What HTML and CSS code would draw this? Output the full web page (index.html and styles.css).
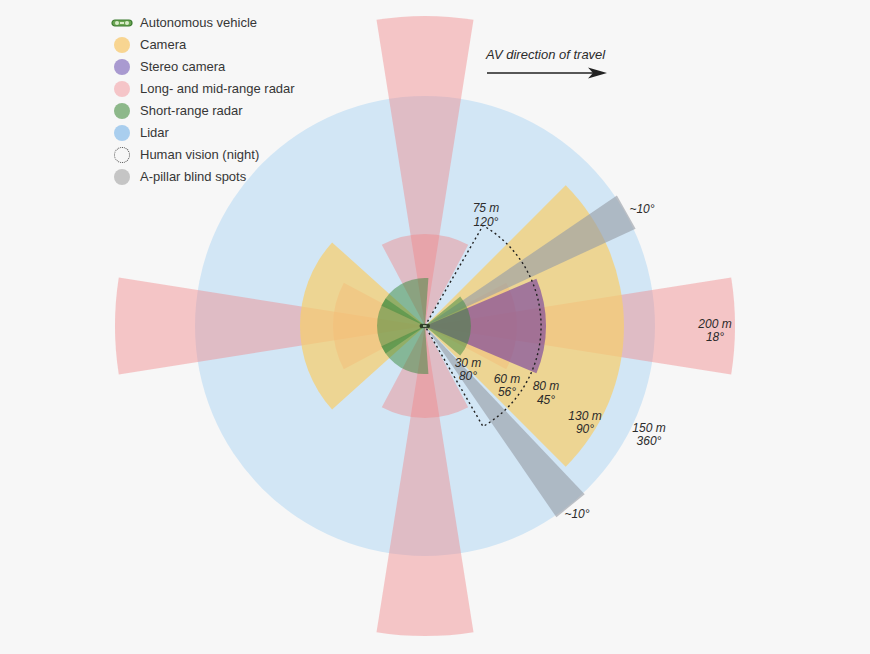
FILE: index.html
```html
<!DOCTYPE html>
<html lang="en">
<head>
<meta charset="utf-8">
<title>AV sensor coverage</title>
<link rel="stylesheet" href="styles.css">
</head>
<body>
<div class="figure">
  <svg class="diagram" width="870" height="654" viewBox="0 0 870 654" xmlns="http://www.w3.org/2000/svg">
    <!-- Lidar 150 m 360 -->
    <circle class="lidar" cx="425" cy="326" r="230"/>
    <!-- Long-range radar 200 m 18 -->
    <path class="radar" d="M425 326 L731.2 277.5 A310 310 0 0 1 731.2 374.5 Z"/>
    <path class="radar" d="M425 326 L118.8 374.5 A310 310 0 0 1 118.8 277.5 Z"/>
    <path class="radar" d="M425 326 L376.5 19.8 A310 310 0 0 1 473.5 19.8 Z"/>
    <path class="radar" d="M425 326 L473.5 632.2 A310 310 0 0 1 376.5 632.2 Z"/>
    <!-- Mid-range radar 60 m 56 -->
    <path class="radar" d="M425 326 L506.2 282.8 A92 92 0 0 1 506.2 369.2 Z"/>
    <path class="radar" d="M425 326 L343.8 369.2 A92 92 0 0 1 343.8 282.8 Z"/>
    <path class="radar" d="M425 326 L381.8 244.8 A92 92 0 0 1 468.2 244.8 Z"/>
    <path class="radar" d="M425 326 L468.2 407.2 A92 92 0 0 1 381.8 407.2 Z"/>
    <!-- Cameras -->
    <path class="camera" d="M425 326 L565.7 185.3 A199 199 0 0 1 565.7 466.7 Z"/>
    <path class="camera" d="M425 326 L332.1 409.6 A125 125 0 0 1 332.1 242.4 Z"/>
    <!-- Stereo camera 80 m 45 -->
    <path class="stereo" d="M425 326 L536.4 278.7 A121 121 0 0 1 536.4 373.3 Z"/>
    <!-- A-pillar blind spots -->
    <polygon class="blind" points="425,326 616.9,195.6 635.6,228.7"/>
    <polygon class="blind" points="425,326 584.7,494.3 556.4,517.2"/>
    <!-- Short-range radar -->
    <path class="short" d="M425 326 L460.2 296.4 A46 46 0 0 1 460.2 355.6 Z"/>
    <path class="short" d="M425 326 L381.5 305.7 A48 48 0 0 1 428.4 278.1 Z"/>
    <path class="short" d="M425 326 L385.7 353.5 A48 48 0 0 1 385.7 298.5 Z"/>
    <path class="short" d="M425 326 L428.4 373.9 A48 48 0 0 1 381.5 346.3 Z"/>
    <!-- Human vision (night) 75 m 120 -->
    <path class="vision" d="M425 326 L483 225.5 A116 116 0 0 1 483 426.5 Z"/>
    <!-- Vehicle -->
    <rect class="car" x="420" y="324.3" width="9.5" height="3.4" rx="1.2"/>
    <rect class="car-light" x="423" y="325.3" width="3.5" height="1.4"/>

    <!-- Direction of travel -->
    <text class="title" x="486" y="59">AV direction of travel</text>
    <line class="arrow-line" x1="487" y1="73" x2="596" y2="73"/>
    <polygon class="arrow-head" points="588,67.5 607,73 588,78.5 593,73"/>

    <!-- Labels -->
    <text class="lbl"><tspan x="486" y="212">75 m</tspan><tspan x="486" y="226">120°</tspan></text>
    <text class="lbl"><tspan x="468" y="367">30 m</tspan><tspan x="468" y="380">80°</tspan></text>
    <text class="lbl"><tspan x="507" y="383">60 m</tspan><tspan x="507" y="396">56°</tspan></text>
    <text class="lbl"><tspan x="546" y="390">80 m</tspan><tspan x="546" y="404">45°</tspan></text>
    <text class="lbl"><tspan x="585" y="420">130 m</tspan><tspan x="585" y="433">90°</tspan></text>
    <text class="lbl"><tspan x="649" y="432">150 m</tspan><tspan x="649" y="445">360°</tspan></text>
    <text class="lbl"><tspan x="715" y="328">200 m</tspan><tspan x="715" y="341">18°</tspan></text>
    <text class="lbl" x="642" y="213">~10°</text>
    <text class="lbl" x="577" y="518">~10°</text>
  </svg>

  <ul class="legend">
    <li class="legend-item">
      <span class="legend-icon">
        <svg class="vehicle-icon" width="22" height="8" viewBox="0 0 22 8" xmlns="http://www.w3.org/2000/svg">
          <rect x="1" y="1" width="20" height="6" rx="3" fill="#6aa552" stroke="#3b7a2e" stroke-width="1.2"/>
          <circle cx="6" cy="4" r="2" fill="#d9ecc9"/>
          <circle cx="16" cy="4" r="2" fill="#d9ecc9"/>
          <rect x="9" y="3" width="4" height="2" fill="#d9ecc9"/>
        </svg>
      </span>
      <span class="legend-text">Autonomous vehicle</span>
    </li>
    <li class="legend-item"><span class="legend-icon"><span class="dot dot-camera"></span></span><span class="legend-text">Camera</span></li>
    <li class="legend-item"><span class="legend-icon"><span class="dot dot-stereo"></span></span><span class="legend-text">Stereo camera</span></li>
    <li class="legend-item"><span class="legend-icon"><span class="dot dot-radar"></span></span><span class="legend-text">Long- and mid-range radar</span></li>
    <li class="legend-item"><span class="legend-icon"><span class="dot dot-short"></span></span><span class="legend-text">Short-range radar</span></li>
    <li class="legend-item"><span class="legend-icon"><span class="dot dot-lidar"></span></span><span class="legend-text">Lidar</span></li>
    <li class="legend-item"><span class="legend-icon"><span class="dot dot-vision"></span></span><span class="legend-text">Human vision (night)</span></li>
    <li class="legend-item"><span class="legend-icon"><span class="dot dot-blind"></span></span><span class="legend-text">A-pillar blind spots</span></li>
  </ul>
</div>
</body>
</html>
```

FILE: styles.css
```css
html, body {
  margin: 0;
  padding: 0;
  background: #f7f7f7;
}

.figure {
  position: relative;
  width: 870px;
  height: 654px;
  overflow: hidden;
  font-family: "Liberation Sans", Arial, sans-serif;
  color: #333;
}

.diagram {
  position: absolute;
  left: 0;
  top: 0;
}

.lidar { fill: #d2e6f5; }
.radar { fill: rgba(240, 133, 135, 0.43); }
.camera { fill: rgba(247, 206, 109, 0.72); }
.stereo { fill: rgba(110, 55, 160, 0.6); }
.blind { fill: rgba(150, 156, 166, 0.62); }
.short { fill: rgba(55, 135, 60, 0.5); }
.vision {
  fill: none;
  stroke: #222;
  stroke-width: 1.4;
  stroke-dasharray: 2 3;
}
.car { fill: #2c3f28; stroke: #1e2a1b; stroke-width: 0.6; }
.car-light { fill: #c9dfbb; }

.title {
  font-family: "Liberation Sans", Arial, sans-serif;
  font-style: italic;
  font-size: 13px;
  fill: #2b2b2b;
}
.arrow-line { stroke: #222; stroke-width: 1.5; }
.arrow-head { fill: #222; }

.lbl {
  font-family: "Liberation Sans", Arial, sans-serif;
  font-style: italic;
  font-size: 12px;
  fill: #2b2b2b;
  text-anchor: middle;
}

.legend {
  position: relative;
  list-style: none;
  margin: 0;
  padding: 12px 0 0 110px;
  display: flex;
  flex-direction: column;
}

.legend-item {
  display: flex;
  align-items: center;
  height: 22px;
  gap: 6px;
}

.legend-icon {
  width: 24px;
  height: 22px;
  display: flex;
  align-items: center;
  justify-content: center;
}

.vehicle-icon { display: block; }

.legend-text {
  font-size: 13px;
  line-height: 22px;
  color: #363636;
}

.dot {
  width: 16px;
  height: 16px;
  border-radius: 50%;
  box-sizing: border-box;
}
.dot-camera { background: #f8d591; }
.dot-stereo { background: #a99ad0; }
.dot-radar { background: #f5c5c8; }
.dot-short { background: #8db88a; }
.dot-lidar { background: #a9ceee; }
.dot-blind { background: #c5c5c5; }
.dot-vision {
  border: 1.5px dotted #444;
}
```
